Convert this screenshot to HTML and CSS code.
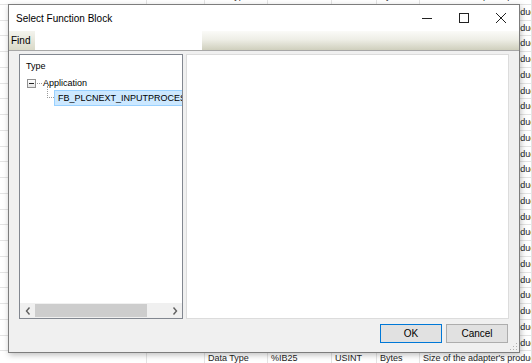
FILE: index.html
```html
<!DOCTYPE html>
<html lang="en">
<head>
    <meta charset="UTF-8">
    <title>Select Function Block</title>
    <link rel="stylesheet" href="styles.css">
</head>
<body>
    <div class="sheet">
        <div class="row"><span></span><span></span><span>Data Type</span><span>%IB1</span><span>USINT</span><span>Bytes</span><span>Size of the adapter's produced data</span></div>
        <div class="row"><span></span><span></span><span>Data Type</span><span>%IB2</span><span>USINT</span><span>Bytes</span><span>Size of the adapter's produced data</span></div>
        <div class="row"><span></span><span></span><span>Data Type</span><span>%IB3</span><span>USINT</span><span>Bytes</span><span>Size of the adapter's produced data</span></div>
        <div class="row"><span></span><span></span><span>Data Type</span><span>%IB4</span><span>USINT</span><span>Bytes</span><span>Size of the adapter's produced data</span></div>
        <div class="row"><span></span><span></span><span>Data Type</span><span>%IB5</span><span>USINT</span><span>Bytes</span><span>Size of the adapter's produced data</span></div>
        <div class="row"><span></span><span></span><span>Data Type</span><span>%IB6</span><span>USINT</span><span>Bytes</span><span>Size of the adapter's produced data</span></div>
        <div class="row"><span></span><span></span><span>Data Type</span><span>%IB7</span><span>USINT</span><span>Bytes</span><span>Size of the adapter's produced data</span></div>
        <div class="row"><span></span><span></span><span>Data Type</span><span>%IB8</span><span>USINT</span><span>Bytes</span><span>Size of the adapter's produced data</span></div>
        <div class="row"><span></span><span></span><span>Data Type</span><span>%IB9</span><span>USINT</span><span>Bytes</span><span>Size of the adapter's produced data</span></div>
        <div class="row"><span></span><span></span><span>Data Type</span><span>%IB10</span><span>USINT</span><span>Bytes</span><span>Size of the adapter's produced data</span></div>
        <div class="row"><span></span><span></span><span>Data Type</span><span>%IB11</span><span>USINT</span><span>Bytes</span><span>Size of the adapter's produced data</span></div>
        <div class="row"><span></span><span></span><span>Data Type</span><span>%IB12</span><span>USINT</span><span>Bytes</span><span>Size of the adapter's produced data</span></div>
        <div class="row"><span></span><span></span><span>Data Type</span><span>%IB13</span><span>USINT</span><span>Bytes</span><span>Size of the adapter's produced data</span></div>
        <div class="row"><span></span><span></span><span>Data Type</span><span>%IB14</span><span>USINT</span><span>Bytes</span><span>Size of the adapter's produced data</span></div>
        <div class="row"><span></span><span></span><span>Data Type</span><span>%IB15</span><span>USINT</span><span>Bytes</span><span>Size of the adapter's produced data</span></div>
        <div class="row"><span></span><span></span><span>Data Type</span><span>%IB16</span><span>USINT</span><span>Bytes</span><span>Size of the adapter's produced data</span></div>
        <div class="row"><span></span><span></span><span>Data Type</span><span>%IB17</span><span>USINT</span><span>Bytes</span><span>Size of the adapter's produced data</span></div>
        <div class="row"><span></span><span></span><span>Data Type</span><span>%IB18</span><span>USINT</span><span>Bytes</span><span>Size of the adapter's produced data</span></div>
        <div class="row"><span></span><span></span><span>Data Type</span><span>%IB19</span><span>USINT</span><span>Bytes</span><span>Size of the adapter's produced data</span></div>
        <div class="row"><span></span><span></span><span>Data Type</span><span>%IB20</span><span>USINT</span><span>Bytes</span><span>Size of the adapter's produced data</span></div>
        <div class="row"><span></span><span></span><span>Data Type</span><span>%IB21</span><span>USINT</span><span>Bytes</span><span>Size of the adapter's produced data</span></div>
        <div class="row"><span></span><span></span><span>Data Type</span><span>%IB22</span><span>USINT</span><span>Bytes</span><span>Size of the adapter's produced data</span></div>
        <div class="row"><span></span><span></span><span>Data Type</span><span>%IB23</span><span>USINT</span><span>Bytes</span><span>Size of the adapter's produced data</span></div>
        <div class="row"><span></span><span></span><span>Data Type</span><span>%IB25</span><span>USINT</span><span>Bytes</span><span>Size of the adapter's produced data</span></div>
    </div>

    <div class="dialog">
        <div class="titlebar">
            <span class="title">Select Function Block</span>
            <div class="win-controls">
                <span class="win-btn">
                    <svg width="10" height="10" viewBox="0 0 10 10"><path d="M0 5.5h10" stroke="#222" stroke-width="1"/></svg>
                </span>
                <span class="win-btn">
                    <svg width="10" height="10" viewBox="0 0 10 10"><rect x="0.5" y="0.5" width="9" height="9" fill="none" stroke="#222" stroke-width="1"/></svg>
                </span>
                <span class="win-btn">
                    <svg width="10" height="10" viewBox="0 0 10 10"><path d="M0 0L10 10M10 0L0 10" stroke="#222" stroke-width="1"/></svg>
                </span>
            </div>
        </div>

        <div class="toolbar">
            <span class="find-label">Find</span>
            <span class="find-box"></span>
            <span class="toolbar-fill"></span>
        </div>

        <div class="content">
            <div class="tree-panel">
                <div class="tree">
                    <div class="tree-head">Type</div>
                    <div class="node">
                        <span class="expander"></span>
                        <span class="dots"></span>
                        <span class="node-label">Application</span>
                    </div>
                    <div class="node child">
                        <span class="elbow"></span>
                        <span class="node-label selected">FB_PLCNEXT_INPUTPROCESSING</span>
                    </div>
                </div>
                <div class="hscroll">
                    <span class="arrow">
                        <svg width="6" height="8" viewBox="0 0 6 8"><path d="M4.5 0.5L1.5 4l3 3.5" fill="none" stroke="#606060" stroke-width="1.4"/></svg>
                    </span>
                    <span class="track"><span class="thumb"></span></span>
                    <span class="arrow">
                        <svg width="6" height="8" viewBox="0 0 6 8"><path d="M1.5 0.5L4.5 4l-3 3.5" fill="none" stroke="#606060" stroke-width="1.4"/></svg>
                    </span>
                </div>
            </div>
            <div class="detail-panel"></div>
            <div class="buttons">
                <button class="btn default">OK</button>
                <button class="btn">Cancel</button>
            </div>
        </div>

        <svg class="grip" width="10" height="10" viewBox="0 0 10 10">
            <rect x="8" y="8" width="1" height="1" fill="#b0b0b0"/>
            <rect x="5" y="8" width="1" height="1" fill="#b0b0b0"/>
            <rect x="8" y="5" width="1" height="1" fill="#b0b0b0"/>
            <rect x="2" y="8" width="1" height="1" fill="#b0b0b0"/>
            <rect x="5" y="5" width="1" height="1" fill="#b0b0b0"/>
            <rect x="8" y="2" width="1" height="1" fill="#b0b0b0"/>
        </svg>
    </div>
</body>
</html>
```

FILE: styles.css
```css
* {
    box-sizing: border-box;
    margin: 0;
    padding: 0;
}

body {
    width: 532px;
    height: 363px;
    overflow: hidden;
    position: relative;
    background: #fff;
    font-family: "Liberation Sans", Arial, sans-serif;
    font-size: 9px;
    color: #1e1e1e;
}

/* spreadsheet behind the dialog */
.sheet {
    margin-top: -11px;
}

.row {
    display: grid;
    grid-template-columns: 147px 58px 63px 64px 45px 43px 1fr;
    height: 15.75px;
    border-bottom: 1px solid #e4e4e4;
}

.row span {
    border-right: 1px solid #e4e4e4;
    padding-left: 3px;
    line-height: 15px;
    white-space: nowrap;
    overflow: hidden;
}

/* dialog window */
.dialog {
    position: absolute;
    left: 8px;
    top: 4px;
    width: 512px;
    height: 349px;
    border: 1px solid #7d7d7d;
    background: #f0f0f0;
    box-shadow: 1px 2px 6px rgba(0,0,0,0.25);
    display: flex;
    flex-direction: column;
}

.titlebar {
    height: 26px;
    background: #fff;
    display: flex;
    align-items: center;
}

.title {
    padding-left: 7px;
    font-size: 10px;
    color: #000;
    flex: 1;
}

.win-controls {
    display: flex;
    height: 100%;
}

.win-btn {
    width: 37px;
    display: flex;
    align-items: center;
    justify-content: center;
}

.toolbar {
    height: 20px;
    display: flex;
    border-bottom: 1px solid #a7a7a7;
}

.find-label {
    width: 26px;
    padding-left: 2px;
    font-size: 10px;
    line-height: 19px;
    color: #000;
    background: linear-gradient(#f4f4ee, #d9d9c8);
}

.find-box {
    width: 167px;
    background: #fff;
}

.toolbar-fill {
    flex: 1;
    background: linear-gradient(#fbfbf8 0%, #eeeee6 45%, #cfcfbd 100%);
}

.content {
    flex: 1;
    padding: 3px 10px 0 10px;
    display: grid;
    grid-template-columns: 164px 1fr;
    grid-template-rows: 265px auto;
    column-gap: 3px;
}

.tree-panel {
    background: #fff;
    border: 1px solid #828790;
    display: flex;
    flex-direction: column;
    overflow: hidden;
}

.tree {
    flex: 1;
    overflow: hidden;
    padding: 6px 0 0 6px;
    color: #000;
}

.tree-head {
    font-size: 9px;
    height: 17px;
    line-height: 10px;
}

.node {
    display: flex;
    align-items: center;
    height: 10px;
    white-space: nowrap;
}

.expander {
    width: 9px;
    height: 9px;
    margin-left: 1px;
    border: 1px solid #919191;
    background: linear-gradient(#fff, #e4e4e4);
    position: relative;
    flex: none;
}

.expander::after {
    content: "";
    position: absolute;
    left: 1px;
    top: 3px;
    width: 5px;
    height: 1px;
    background: #222;
}

.dots {
    width: 5px;
    border-top: 1px dotted #9a9a9a;
    margin: 0 1px 0 1px;
}

.node.child {
    height: 16px;
    margin-top: 2px;
    padding-left: 21px;
    align-items: stretch;
}

.elbow {
    width: 7px;
    height: 12px;
    margin-top: -4px;
    border-left: 1px dotted #9a9a9a;
    border-bottom: 1px dotted #9a9a9a;
    flex: none;
}

.node-label.selected {
    background: #cce8ff;
    border: 1px solid #99d1ff;
    padding: 0 3px;
    line-height: 14px;
}

.hscroll {
    height: 15px;
    display: flex;
    align-items: center;
    background: #f0f0f0;
}

.arrow {
    width: 15px;
    display: flex;
    justify-content: center;
}

.track {
    flex: 1;
    height: 100%;
    padding: 1px 0;
}

.thumb {
    display: block;
    width: 112px;
    height: 100%;
    background: #cdcdcd;
}

.detail-panel {
    background: #fff;
    border: 1px solid #dcdcdc;
}

.buttons {
    grid-column: 1 / 3;
    display: flex;
    justify-content: flex-end;
    gap: 4px;
    margin-top: 5px;
    padding-right: 1px;
}

.btn {
    width: 62px;
    height: 19px;
    font-family: "Liberation Sans", Arial, sans-serif;
    font-size: 10px;
    color: #000;
    background: #e1e1e1;
    border: 1px solid #adadad;
}

.btn.default {
    border-color: #0078d7;
}

.grip {
    position: absolute;
    right: 1px;
    bottom: 1px;
}
```
